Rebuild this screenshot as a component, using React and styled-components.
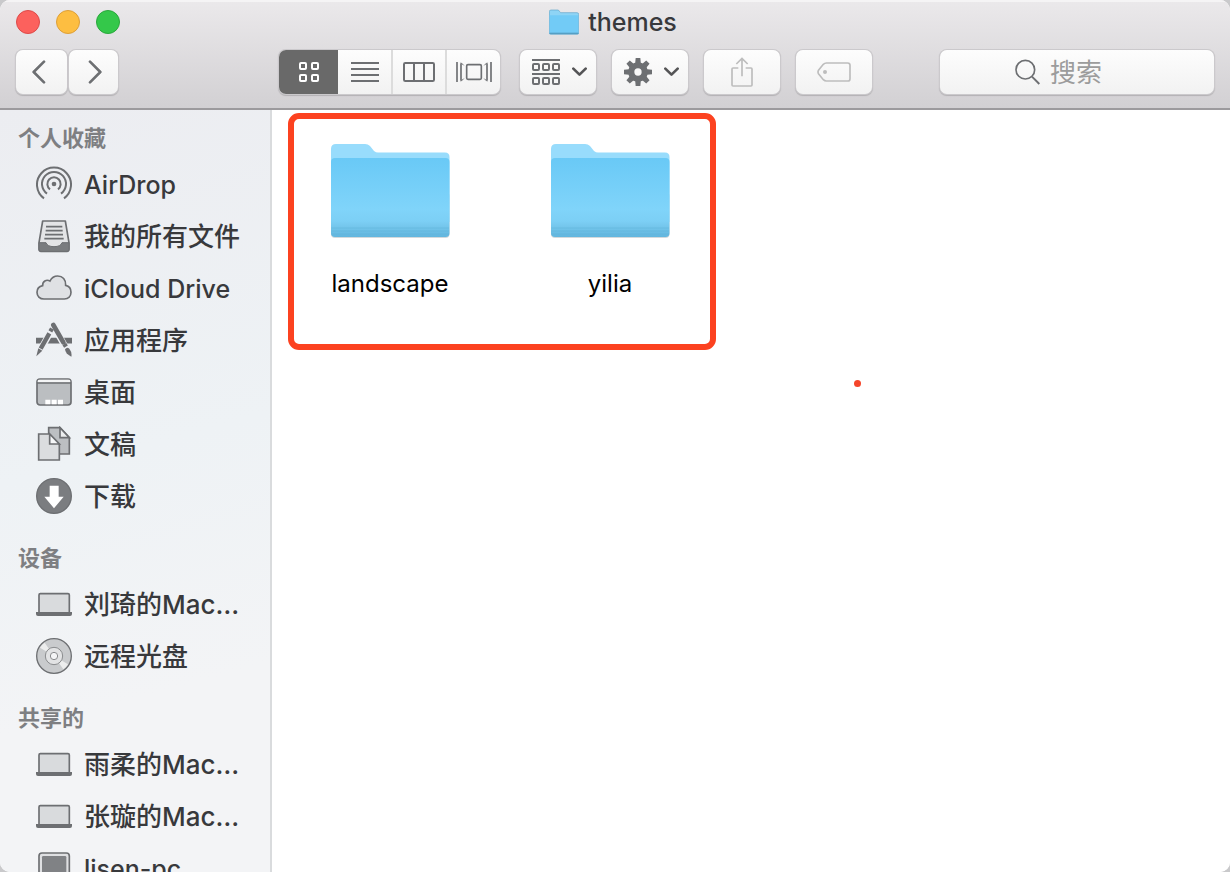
import React from "react";
import styled, { createGlobalStyle } from "styled-components";

const INK = "#6d6f72";

const GlobalStyle = createGlobalStyle`
  *, *::before, *::after { box-sizing: border-box; }
  body {
    margin: 0;
    background: #c9c9cb;
    font-family: Inter, "Noto Sans CJK SC", sans-serif;
    color: #38393c;
  }
  button, input { font: inherit; color: inherit; }
  svg { display: block; flex: none; }
`;

const Window = styled.div`
  display: flex;
  flex-direction: column;
  height: 100vh;
  overflow: hidden;
  border-radius: 10px;
  background: #fff;
`;

const Header = styled.header`
  flex: none;
  height: 110px;
  background: linear-gradient(#ebe9eb, #d2d0d3);
  border-bottom: 2px solid #9c9a9d;
  box-shadow: inset 0 2px 0 #f5f4f5;
`;

const TitleBar = styled.div`
  display: grid;
  grid-template-columns: 1fr auto 1fr;
  align-items: center;
  height: 44px;
  padding: 0 20px 0 16px;
`;

const Lights = styled.div`
  display: flex;
  gap: 16px;
`;

const Light = styled.button`
  width: 24px;
  height: 24px;
  padding: 0;
  border: 1px solid ${(p) => p.$edge};
  border-radius: 50%;
  background: ${(p) => p.$fill};
`;

const Title = styled.h1`
  display: flex;
  align-items: center;
  gap: 9px;
  margin: 0;
  font-size: 25px;
  line-height: 32px;
  font-weight: 500;
`;

const Toolbar = styled.div`
  display: flex;
  align-items: center;
  padding: 6px 16px 0;
`;

const NavGroup = styled.div`
  display: flex;
  gap: 2px;
  margin-right: 161px;
`;

const ToolButton = styled.button`
  display: flex;
  align-items: center;
  justify-content: center;
  gap: 12px;
  width: 76px;
  height: 44px;
  padding: 0 0 0 ${(p) => (p.$menu ? 2 : 0)}px;
  border: 0;
  border-radius: 7px;
  color: ${(p) => (p.disabled ? "#bdbdbd" : INK)};
  background: linear-gradient(#fdfdfd, #f2f2f2);
  box-shadow: 0 0 0 1px #cbc9cc, 0 1px 1px 1px #b3b1b4;
`;

const NavButton = styled(ToolButton)`
  justify-content: flex-start;
  width: ${(p) => (p.$forward ? 49 : 51)}px;
  padding-left: ${(p) => (p.$forward ? 19 : 16)}px;
`;

const ViewGroup = styled.div`
  display: grid;
  grid-template-columns: 59px 53px 54px 55px;
  height: 44px;
  border-radius: 7px;
  overflow: hidden;
  background: linear-gradient(#fdfdfd, #f2f2f2);
  box-shadow: 0 0 0 1px #cbc9cc, 0 1px 1px 1px #b3b1b4;
`;

const Segment = styled.button`
  display: flex;
  align-items: center;
  justify-content: center;
  padding: 0;
  border: 0;
  border-left: ${(p) => (p.$divided ? "2px solid #dcdcdc" : "0")};
  color: ${(p) => (p["aria-pressed"] ? "#fff" : INK)};
  background: ${(p) => (p["aria-pressed"] ? "#696969" : "transparent")};
`;

const Actions = styled.div`
  display: flex;
  gap: 16px;
  margin-left: 20px;
`;

const SearchField = styled.label`
  display: flex;
  align-items: center;
  gap: 10px;
  width: 274px;
  height: 44px;
  margin-left: auto;
  padding-left: 75px;
  border-radius: 7px;
  color: ${INK};
  background: linear-gradient(#fdfdfd, #f2f2f2);
  box-shadow: 0 0 0 1px #cbc9cc, 0 1px 1px 1px #b3b1b4;
`;

const SearchInput = styled.input`
  flex: 1;
  min-width: 0;
  padding: 2px 0 0;
  border: 0;
  outline: 0;
  background: transparent;
  font-size: 26px;
  line-height: 36px;
  &::placeholder { color: #9c9c9c; opacity: 1; }
`;

const Body = styled.div`
  display: flex;
  flex: 1;
  min-height: 0;
`;

const Sidebar = styled.nav`
  display: flex;
  flex-direction: column;
  flex: none;
  gap: 14px;
  width: 272px;
  padding-top: 6px;
  overflow: hidden;
  border-right: 2px solid #d9dbdd;
  background: linear-gradient(165deg, #ecedf1 0%, #eef2f5 45%, #f3f4f6 75%, #f3f4f6 100%);
`;

const Section = styled.section`
  flex: none;
`;

const SectionTitle = styled.h2`
  margin: 0;
  padding: 2px 0 0 18px;
  color: #7e7f82;
  font-size: 22px;
  line-height: 40px;
  font-weight: 600;
`;

const List = styled.ul`
  margin: 0;
  padding: 0;
  list-style: none;
`;

const Place = styled.a`
  display: flex;
  align-items: center;
  gap: 12px;
  height: 52px;
  padding-left: 36px;
  color: inherit;
  text-decoration: none;
  white-space: nowrap;
  font-size: ${(p) => (p.$latin ? 25 : 26)}px;
  line-height: 36px;
  font-weight: 500;
`;

const PlaceName = styled.span`
  padding-top: 2px;
`;

const Content = styled.main`
  position: relative;
  flex: 1;
  min-width: 0;
  background: #fff;
`;

const Files = styled.div`
  display: flex;
  flex-wrap: wrap;
  padding: 32px 8px;
`;

const File = styled.a`
  display: flex;
  flex-direction: column;
  align-items: center;
  gap: 26px;
  width: 220px;
  color: #000;
  text-decoration: none;
  font-size: 24px;
  line-height: 32px;
`;

const Highlight = styled.div`
  position: absolute;
  top: 3px;
  left: 16px;
  width: 428px;
  height: 237px;
  border: 6px solid #fc4220;
  border-radius: 11px;
  pointer-events: none;
`;

const Dot = styled.div`
  position: absolute;
  top: 270px;
  left: 582px;
  width: 7px;
  height: 7px;
  border-radius: 50%;
  background: #f5452a;
`;

const FolderIcon = () => (
  <svg width="120" height="100" viewBox="0 0 120 100" aria-hidden="true">
    <defs>
      <linearGradient id="front" x1="0" y1="0" x2="0" y2="1">
        <stop offset="0" stopColor="#69c9f6" />
        <stop offset="0.65" stopColor="#80d4fa" />
        <stop offset="0.8" stopColor="#7ccff5" />
        <stop offset="0.87" stopColor="#74c6ec" />
        <stop offset="1" stopColor="#62b6de" />
      </linearGradient>
    </defs>
    <rect x="1" y="50" width="118.500" height="46" rx="4" fill="#d3d9dc" />
    <path d="M1 7Q1 2 6 2H35Q38 2 40 4L44 9Q46 10.500 48 10.500H115Q119.500 10.500 119.500 15V80H1Z" fill="#98dcfc" />
    <rect x="1" y="16" width="118.500" height="79" rx="4" fill="url(#front)" />
    <path d="M1.500 86H119M1.500 89H119M1.500 92H119" stroke="#5fb2da" strokeWidth="1" opacity="0.5" />
  </svg>
);

const SmallFolder = () => (
  <svg width="30" height="26" viewBox="0 0 90 78" aria-hidden="true">
    <path d="M1 8Q1 3 6 3H28L35 11H84Q89 11 89 16V72Q89 76 85 76H5Q1 76 1 72Z" fill="#8ed4f5" stroke="#5fa5c8" strokeWidth="2" />
    <path d="M2 19H88V72Q88 75 85 75H5Q2 75 2 72Z" fill="#72cbf6" />
    <path d="M2 73H88" stroke="#559fc4" strokeWidth="4" />
  </svg>
);

const Stroke = ({ w, h, width = 5, children }) => (
  <svg width={w} height={h} viewBox={`0 0 ${w * 3} ${h * 3}`} fill="none" stroke="currentColor" strokeWidth={width} aria-hidden="true">
    {children}
  </svg>
);

const Back = () => (
  <Stroke w={14} h={24} width={8}><path d="M36 5L5 36L36 67" strokeLinecap="round" strokeLinejoin="round" /></Stroke>
);
const Forward = () => (
  <Stroke w={14} h={24} width={8}><path d="M6 5L37 36L6 67" strokeLinecap="round" strokeLinejoin="round" /></Stroke>
);
const GridView = () => (
  <Stroke w={20} h={20} width={6}>
    {[[2, 2], [38, 2], [2, 38], [38, 38]].map(([x, y]) => (
      <rect key={`${x}-${y}`} x={x + 1} y={y + 1} width="18" height="18" rx="3" />
    ))}
  </Stroke>
);
const ListView = () => (
  <Stroke w={28} h={20} width={6}><path d="M0 3H84M0 21H84M0 39H84M0 57H84" /></Stroke>
);
const ColumnView = () => (
  <Stroke w={32} h={20} width={6}>
    <rect x="3" y="3" width="90" height="54" rx="4" />
    <path d="M33 3V57M63 3V57" />
  </Stroke>
);
const FlowView = () => (
  <Stroke w={36} h={20}>
    <rect x="32" y="8" width="44" height="44" rx="4" />
    <path d="M3 0V60M105 0V60" />
    <path d="M15 4V56M93 4V56" />
    <path d="M15 2L23 10M15 58L23 50M93 2L85 10M93 58L85 50" strokeWidth="3" />
  </Stroke>
);
const Arrange = () => (
  <Stroke w={28} h={26} width={6}>
    <path d="M0 3H84M0 45H84" />
    {[3, 33, 63].map((x) => (
      <React.Fragment key={x}>
        <rect x={x} y="15" width="18" height="18" rx="3" />
        <rect x={x} y="57" width="18" height="18" rx="3" />
      </React.Fragment>
    ))}
  </Stroke>
);
const Chevron = () => (
  <svg width="15" height="10" viewBox="0 0 45 30" fill="none" stroke="#545456" strokeWidth="8" aria-hidden="true">
    <path d="M4 5L22.500 23L41 5" strokeLinecap="round" strokeLinejoin="round" />
  </svg>
);
const Gear = () => (
  <svg width="28" height="28" viewBox="-42 -42 84 84" aria-hidden="true">
    <g fill="currentColor">
      {[0, 45, 90, 135].map((a) => (
        <path key={a} d="M-7 -42H7L9 -20V20L7 42H-7L-9 20V-20Z" transform={`rotate(${a})`} />
      ))}
    </g>
    <circle r="20" fill="none" stroke="currentColor" strokeWidth="19" />
    <circle r="11" fill="#f8f8f8" />
  </svg>
);
const Share = () => (
  <Stroke w={22} h={30}>
    <path d="M22 33H6Q3 33 3 36V84Q3 87 6 87H60Q63 87 63 84V36Q63 33 60 33H44" />
    <path d="M33 58V4M16 21L33 4L50 21" />
  </Stroke>
);
const Tag = () => (
  <Stroke w={34} h={20}>
    <path d="M28 3H92Q99 3 99 10V50Q99 57 92 57H28Q23 57 19 53L5 36Q1 30 5 24L19 7Q23 3 28 3Z" />
    <circle cx="24" cy="30" r="6" fill="currentColor" stroke="none" />
  </Stroke>
);
const Magnifier = () => (
  <Stroke w={25} h={26}>
    <circle cx="31" cy="32" r="28" />
    <path d="M51 53L73 75" strokeWidth="6" />
  </Stroke>
);

const PlaceSvg = ({ children }) => (
  <svg width="36" height="36" viewBox="0 0 108 108" fill="none" stroke={INK} strokeWidth="5" aria-hidden="true">
    {children}
  </svg>
);

const AirDrop = () => (
  <PlaceSvg>
    <path d="M24 97A51 51 0 1 1 84 97" strokeWidth="6" />
    <path d="M33 83A36 36 0 1 1 75 83" strokeWidth="6" />
    <path d="M42 70A20 20 0 1 1 66 70" strokeWidth="6" />
    <circle cx="54" cy="54" r="7" fill={INK} stroke="none" />
  </PlaceSvg>
);
const AllFiles = () => (
  <PlaceSvg>
    <path d="M20 9H88L99 74V94Q99 100 93 100H15Q9 100 9 94V74Z" fill="#e3e4e6" strokeLinejoin="round" />
    <path d="M9 74H30Q34 86 54 86T78 74H99V94Q99 100 93 100H15Q9 100 9 94Z" fill="#7a7c7f" strokeWidth="3" />
    <path d="M30 26H79M29 38H80M27 50H81M25 62H83" />
  </PlaceSvg>
);
const Cloud = () => (
  <PlaceSvg>
    <path d="M24 87C11 87 3 78 3 67C3 56 11 49 20 47C19 34 31 27 42 33C47 23 55 18 65 18C80 18 90 29 89 46C98 48 105 56 105 67C105 79 97 87 85 87Z" fill="#dfe1e4" />
  </PlaceSvg>
);
const Applications = () => (
  <PlaceSvg>
    <path d="M0 56H108" strokeWidth="17" />
    <path d="M49 20L4 100M50 8L104 102" stroke="#edeff3" strokeWidth="20" />
    <path d="M48 20L43 28M40 34L14 80" strokeWidth="13" />
    <path d="M7 79L19 86L1 103Z" fill={INK} stroke="none" />
    <path d="M52 9L82 61" strokeWidth="14" strokeLinecap="round" />
    <path d="M85 66L90 74" strokeWidth="13" />
    <path d="M87 82Q93 74 100 80Q109 92 106 104Q88 96 87 82Z" fill={INK} stroke="none" />
  </PlaceSvg>
);
const Desktop = () => (
  <PlaceSvg>
    <rect x="3" y="15" width="102" height="78" rx="9" fill="#bbbec1" />
    <path d="M5 25V21Q5 17 10 17H98Q103 17 103 21V25Z" fill="#f4f5f6" stroke="none" />
    <path d="M3 27H105" />
    <path d="M28 77H43V91H28ZM47 77H62V91H47ZM66 77H81V91H66Z" fill="#fff" stroke="none" />
  </PlaceSvg>
);
const Documents = () => (
  <PlaceSvg>
    <path d="M38 5H72L100 35V84H38Z" fill="#bcbfc2" />
    <path d="M72 5V35H100Z" fill="#eceeef" />
    <path d="M8 24H41L70 55V102H8Z" fill="#dbdddf" />
    <path d="M41 24V54H70Z" fill="#f6f7f8" />
  </PlaceSvg>
);
const Downloads = () => (
  <PlaceSvg>
    <circle cx="54" cy="54" r="52" fill="#7b7d80" strokeWidth="4" />
    <path d="M41 23H68V56H83L54 91L25 56H41Z" fill="#fff" stroke="none" />
  </PlaceSvg>
);
const Laptop = () => (
  <PlaceSvg>
    <rect x="9" y="23" width="91" height="58" rx="4" fill="#d9dbdd" />
    <path d="M0 78H108V84Q108 90 102 90H6Q0 90 0 84Z" fill={INK} stroke="none" />
  </PlaceSvg>
);
const Disc = () => (
  <PlaceSvg>
    <circle cx="54" cy="54" r="52" fill="#c9cbcd" strokeWidth="4" />
    <path d="M54 54L12 29A49 49 0 0 1 26 14ZM54 54L96 79A49 49 0 0 1 82 94Z" fill="#eceded" stroke="none" />
    <circle cx="54" cy="54" r="26" fill="#e2e3e4" stroke="#8a8c8e" strokeWidth="3" />
    <circle cx="54" cy="54" r="11" fill="#f4f5f6" stroke="#8a8c8e" strokeWidth="3" />
  </PlaceSvg>
);
const Computer = () => (
  <PlaceSvg>
    <rect x="9" y="9" width="91" height="110" rx="9" fill="#dfe0e2" />
    <rect x="18" y="18" width="73" height="100" rx="4" fill="#808285" stroke="none" />
  </PlaceSvg>
);

const sections = [
  {
    title: "个人收藏",
    places: [
      { name: "AirDrop", Icon: AirDrop, latin: true },
      { name: "我的所有文件", Icon: AllFiles },
      { name: "iCloud Drive", Icon: Cloud, latin: true },
      { name: "应用程序", Icon: Applications },
      { name: "桌面", Icon: Desktop },
      { name: "文稿", Icon: Documents },
      { name: "下载", Icon: Downloads },
    ],
  },
  {
    title: "设备",
    places: [
      { name: "刘琦的Mac…", Icon: Laptop },
      { name: "远程光盘", Icon: Disc },
    ],
  },
  {
    title: "共享的",
    places: [
      { name: "雨柔的Mac…", Icon: Laptop },
      { name: "张璇的Mac…", Icon: Laptop },
      { name: "lisen-pc", Icon: Computer, latin: true },
    ],
  },
];

export default function App() {
  return (
    <>
      <GlobalStyle />
      <Window>
        <Header>
          <TitleBar>
            <Lights>
              <Light $fill="#fc615d" $edge="#dd4a49" aria-label="关闭" />
              <Light $fill="#fdbe41" $edge="#dd9f38" aria-label="最小化" />
              <Light $fill="#34c84a" $edge="#2aa73c" aria-label="缩放" />
            </Lights>
            <Title><SmallFolder />themes</Title>
          </TitleBar>
          <Toolbar>
            <NavGroup>
              <NavButton aria-label="后退"><Back /></NavButton>
              <NavButton $forward aria-label="前进"><Forward /></NavButton>
            </NavGroup>
            <ViewGroup role="group" aria-label="显示">
              <Segment aria-pressed={true} aria-label="图标"><GridView /></Segment>
              <Segment aria-pressed={false} aria-label="列表"><ListView /></Segment>
              <Segment aria-pressed={false} $divided aria-label="分栏"><ColumnView /></Segment>
              <Segment aria-pressed={false} $divided aria-label="封面流"><FlowView /></Segment>
            </ViewGroup>
            <Actions>
              <ToolButton $menu aria-label="排列"><Arrange /><Chevron /></ToolButton>
              <ToolButton $menu aria-label="操作"><Gear /><Chevron /></ToolButton>
              <ToolButton disabled aria-label="共享"><Share /></ToolButton>
              <ToolButton disabled aria-label="标记"><Tag /></ToolButton>
            </Actions>
            <SearchField>
              <Magnifier />
              <SearchInput type="text" placeholder="搜索" aria-label="搜索" />
            </SearchField>
          </Toolbar>
        </Header>
        <Body>
          <Sidebar>
            {sections.map(({ title, places }) => (
              <Section key={title}>
                <SectionTitle>{title}</SectionTitle>
                <List>
                  {places.map(({ name, Icon, latin }) => (
                    <li key={name}>
                      <Place href="#" $latin={latin}><Icon /><PlaceName>{name}</PlaceName></Place>
                    </li>
                  ))}
                </List>
              </Section>
            ))}
          </Sidebar>
          <Content>
            <Files>
              <File href="#"><FolderIcon />landscape</File>
              <File href="#"><FolderIcon />yilia</File>
            </Files>
            <Highlight />
            <Dot />
          </Content>
        </Body>
      </Window>
    </>
  );
}
